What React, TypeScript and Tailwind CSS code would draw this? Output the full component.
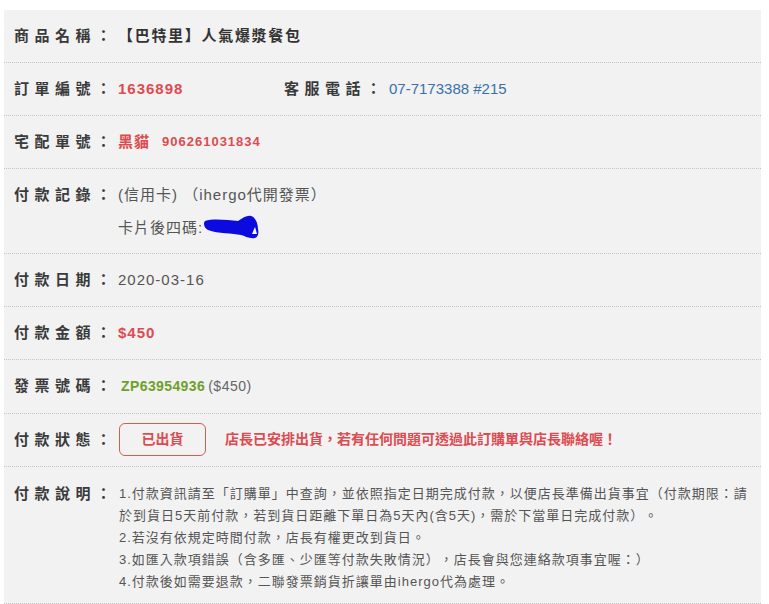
import React from "react";

const FONT = '"Liberation Sans", Arial, "Noto Sans CJK TC", sans-serif';

function Label({ children }: { children: React.ReactNode }) {
  return (
    <div className="w-[104px] shrink-0 whitespace-nowrap text-[15px] font-bold leading-[22px] tracking-[5.5px] text-[#3a3a3a]">
      {children}
    </div>
  );
}

function Row({
  label,
  children,
  className = "py-[15px]",
  align = "items-start",
}: {
  label: string;
  children: React.ReactNode;
  className?: string;
  align?: string;
}) {
  return (
    <div className={`flex ${align} border-b border-dotted border-[#c4c4c4] pl-[10px] ${className}`}>
      <Label>{label}</Label>
      <div className="min-w-0 flex-1">{children}</div>
    </div>
  );
}

// Hand-drawn marker that hides the last four card digits
function Scribble() {
  return (
    <svg width="56" height="24" viewBox="0 0 56 24" className="inline-block align-middle -mt-[2px]">
      <path
        d="M2,6 C10,3 25,5 35,6 C40,3 44,0 48,1 C52,2 55,8 55,14 C56,18 55,22 52,23 C46,24 42,21 38,20 C30,18 15,19 5,15 C1,13 0,8 2,6 Z"
        fill="#0b0be0"
      />
      <path d="M49,19 L54,19 L52,12 Z" fill="#ffffff" />
    </svg>
  );
}

export default function App() {
  return (
    <div
      className="min-h-[604px] bg-white pt-[10px] [text-spacing-trim:space-all]"
      style={{ fontFamily: FONT }}
    >
      <div className="ml-[4px] w-[757px] bg-[#f2f2f2]">
        <Row label="商品名稱：">
          <div className="text-[15px] font-bold leading-[22px] tracking-[1.7px] text-[#333]">
            【巴特里】人氣爆漿餐包
          </div>
        </Row>

        <Row label="訂單編號：">
          <div className="flex items-start">
            <div className="w-[166px] shrink-0 text-[15px] font-bold leading-[22px] tracking-[1px] text-[#dd4b50]">
              1636898
            </div>
            <Label>客服電話：</Label>
            <div className="ml-[1px] text-[15px] leading-[22px] text-[#3a70aa]">07-7173388 #215</div>
          </div>
        </Row>

        <Row label="宅配單號：">
          <div className="flex items-center leading-[22px] font-bold text-[#dd4b50]">
            <span className="text-[15px] tracking-[1px]">黑貓</span>
            <span className="ml-[12px] text-[13px] tracking-[1px]">906261031834</span>
          </div>
        </Row>

        <Row label="付款記錄：" className="pt-[15px] pb-[14px]">
          <div className="text-[15px] leading-[22px] tracking-[1px] text-[#555]">
            <div>(信用卡) （ihergo代開發票）</div>
            <div className="mt-[11px] flex items-center">
              <span>卡片後四碼:</span>
              <Scribble />
            </div>
          </div>
        </Row>

        <Row label="付款日期：">
          <div className="text-[15px] leading-[22px] tracking-[1px] text-[#555]">2020-03-16</div>
        </Row>

        <Row label="付款金額：">
          <div className="text-[15px] font-bold leading-[22px] tracking-[1px] text-[#dd4b50]">$450</div>
        </Row>

        <Row label="發票號碼：" className="pt-[15px] pb-[16px]">
          <div className="flex items-center leading-[22px]">
            <span className="ml-[3px] text-[14px] font-bold tracking-[0.4px] text-[#6fa02a]">ZP63954936</span>
            <span className="ml-[3px] text-[14px] tracking-[0.5px] text-[#666]">($450)</span>
          </div>
        </Row>

        <Row label="付款狀態：" className="pt-[9px] pb-[10px]" align="items-center">
          <div className="flex items-center">
            <div className="ml-[1px] flex h-[33px] w-[87px] items-center justify-center rounded-[6px] border border-[#cf5f4f] text-[14px] font-bold text-[#dd4b50]">
              已出貨
            </div>
            <div className="ml-[19px] text-[14px] font-bold text-[#dd4b50]">
              店長已安排出貨，若有任何問題可透過此訂購單與店長聯絡喔！
            </div>
          </div>
        </Row>

        <Row label="付款說明：" className="pt-[16px] pb-[10px]">
          <div className="ml-[1px] w-[636px] text-[13px] leading-[22px] tracking-[1px] text-[#555]">
            <div>
              1.付款資訊請至「訂購單」中查詢，並依照指定日期完成付款，以便店長準備出貨事宜（付款期限：請於到貨日5天前付款，若到貨日距離下單日為5天內(含5天)，需於下當單日完成付款）。
            </div>
            <div>2.若沒有依規定時間付款，店長有權更改到貨日。</div>
            <div>3.如匯入款項錯誤（含多匯、少匯等付款失敗情況），店長會與您連絡款項事宜喔：）</div>
            <div>4.付款後如需要退款，二聯發票銷貨折讓單由ihergo代為處理。</div>
          </div>
        </Row>
      </div>
    </div>
  );
}
